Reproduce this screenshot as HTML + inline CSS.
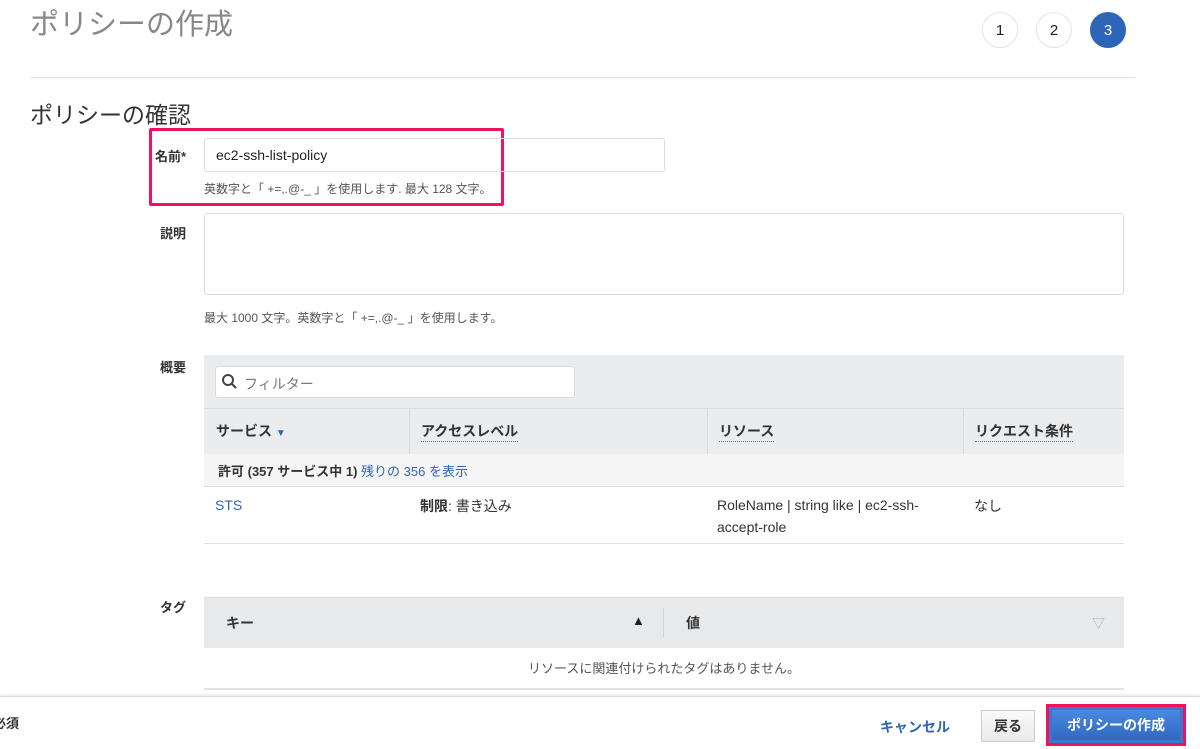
<!DOCTYPE html>
<html><head><meta charset="utf-8"><style>
*{box-sizing:border-box;margin:0;padding:0}
body{width:1200px;height:749px;overflow:hidden;background:#fff;font-family:"Liberation Sans","Noto Sans CJK JP",sans-serif;color:#222;position:relative}
.a{position:absolute;white-space:nowrap}
.lbl{font-size:13px;font-weight:bold;color:#333}
.small{font-size:12px;color:#555}
.circ{position:absolute;width:36px;height:36px;border-radius:50%;border:1px solid #e4e4e4;text-align:center;line-height:36px;font-size:15px;color:#222;top:12px}
.hd{font-size:14px;font-weight:bold;color:#333}
.ul{border-bottom:1px dotted #666;padding-bottom:2px}
</style></head><body>
<div class="a" style="left:30px;top:1px;font-size:29px;color:#888">ポリシーの作成</div>
<div class="circ" style="left:982px">1</div>
<div class="circ" style="left:1036px">2</div>
<div class="circ" style="left:1090px;background:#2e66b7;border-color:#2e66b7;color:#fff">3</div>
<div class="a" style="left:30px;top:77px;width:1105px;height:1px;background:#e2e2e2"></div>
<div class="a" style="left:30px;top:96px;font-size:23px;color:#333">ポリシーの確認</div>

<div class="a" style="left:149px;top:128px;width:355px;height:78px;border:3px solid #f0115f;border-radius:2px"></div>
<div class="a lbl" style="left:155px;top:146px">名前*</div>
<div class="a" style="left:204px;top:138px;width:461px;height:34px;border:1px solid #ddd;border-radius:3px;font-size:14px;padding:8px 11px;color:#222">ec2-ssh-list-policy</div>
<div class="a small" style="left:204px;top:180px">英数字と「 +=,.@-_ 」を使用します. 最大 128 文字。</div>

<div class="a lbl" style="left:160px;top:223px">説明</div>
<div class="a" style="left:204px;top:213px;width:920px;height:82px;border:1px solid #ddd;border-radius:3px"></div>
<div class="a small" style="left:204px;top:309px">最大 1000 文字。英数字と「 +=,.@-_ 」を使用します。</div>

<div class="a lbl" style="left:160px;top:357px">概要</div>
<div class="a" style="left:204px;top:355px;width:920px;height:99px;background:#ebeced"></div>
<div class="a" style="left:215px;top:366px;width:360px;height:32px;background:#fff;border:1px solid #ddd;border-radius:3px;font-size:14px;color:#777;padding:7px 0 0 28px">フィルター</div>
<svg class="a" style="left:221px;top:373px" width="18" height="18" viewBox="0 0 18 18"><circle cx="7" cy="7" r="5" fill="none" stroke="#444" stroke-width="2"/><line x1="10.5" y1="10.5" x2="15" y2="15" stroke="#444" stroke-width="2.2"/></svg>
<div class="a" style="left:204px;top:408px;width:920px;height:1px;background:#dcdcdc"></div>
<div class="a" style="left:409px;top:408px;width:1px;height:46px;background:#dcdcdc"></div>
<div class="a" style="left:707px;top:408px;width:1px;height:46px;background:#dcdcdc"></div>
<div class="a" style="left:963px;top:408px;width:1px;height:46px;background:#dcdcdc"></div>
<div class="a hd" style="left:216px;top:421px">サービス <span style="color:#2e66b7;font-size:10px">▼</span></div>
<div class="a hd" style="left:421px;top:421px"><span class="ul">アクセスレベル</span></div>
<div class="a hd" style="left:719px;top:421px"><span class="ul">リソース</span></div>
<div class="a hd" style="left:975px;top:421px"><span class="ul">リクエスト条件</span></div>
<div class="a" style="left:204px;top:454px;width:920px;height:33px;background:#f5f5f5;border-bottom:1px solid #e2e2e2"></div>
<div class="a" style="left:218px;top:461px;font-size:13px;color:#333"><b>許可 (357 サービス中 1)</b> <span style="color:#2e66b7">残りの 356 を表示</span></div>
<div class="a" style="left:215px;top:497px;font-size:14px;color:#2e66b7">STS</div>
<div class="a" style="left:420px;top:496px;font-size:14px;color:#333"><b>制限</b>: 書き込み</div>
<div class="a" style="left:717px;top:494px;font-size:14px;color:#333;line-height:22px">RoleName | string like | ec2-ssh-<br>accept-role</div>
<div class="a" style="left:974px;top:496px;font-size:14px;color:#333">なし</div>
<div class="a" style="left:204px;top:543px;width:920px;height:1px;background:#e2e2e2"></div>

<div class="a lbl" style="left:160px;top:597px">タグ</div>
<div class="a" style="left:204px;top:597px;width:920px;height:51px;background:#e8e9ea;border-top:1px solid #ddd"></div>
<div class="a" style="left:663px;top:608px;width:1px;height:30px;background:#d5d5d5"></div>
<div class="a hd" style="left:226px;top:613px">キー</div>
<div class="a" style="left:632px;top:613px;font-size:13px;color:#222">▲</div>
<div class="a hd" style="left:686px;top:613px">値</div>
<div class="a" style="left:1092px;top:613px;font-size:13px;color:#aaa">▽</div>
<div class="a" style="left:204px;top:658px;width:920px;text-align:center;font-size:13px;color:#555">リソースに関連付けられたタグはありません。</div>
<div class="a" style="left:204px;top:688px;width:920px;height:2px;background:#e2e2e2"></div>

<div class="a" style="left:0;top:696px;width:1200px;height:53px;background:#fff;border-top:1px solid #ddd;box-shadow:0 -1px 3px rgba(0,0,0,.1)"></div>
<div class="a lbl" style="left:-7px;top:713px">必須</div>
<div class="a" style="left:880px;top:717px;font-size:14px;font-weight:bold;color:#2e66b7">キャンセル</div>
<div class="a" style="left:981px;top:710px;width:54px;height:32px;border:1px solid #ccc;border-radius:2px;background:linear-gradient(#fafafa,#e9e9e9);font-size:14px;font-weight:bold;color:#333;text-align:center;line-height:30px">戻る</div>
<div class="a" style="left:1046px;top:704px;width:140px;height:42px;border:3px solid #f0115f;background:#3a78d0"></div>
<div class="a" style="left:1052px;top:710px;width:128px;height:30px;background:linear-gradient(#4a8ae0,#2f68c0);font-size:14px;font-weight:bold;color:#fff;text-align:center;line-height:30px">ポリシーの作成</div>
</body></html>
